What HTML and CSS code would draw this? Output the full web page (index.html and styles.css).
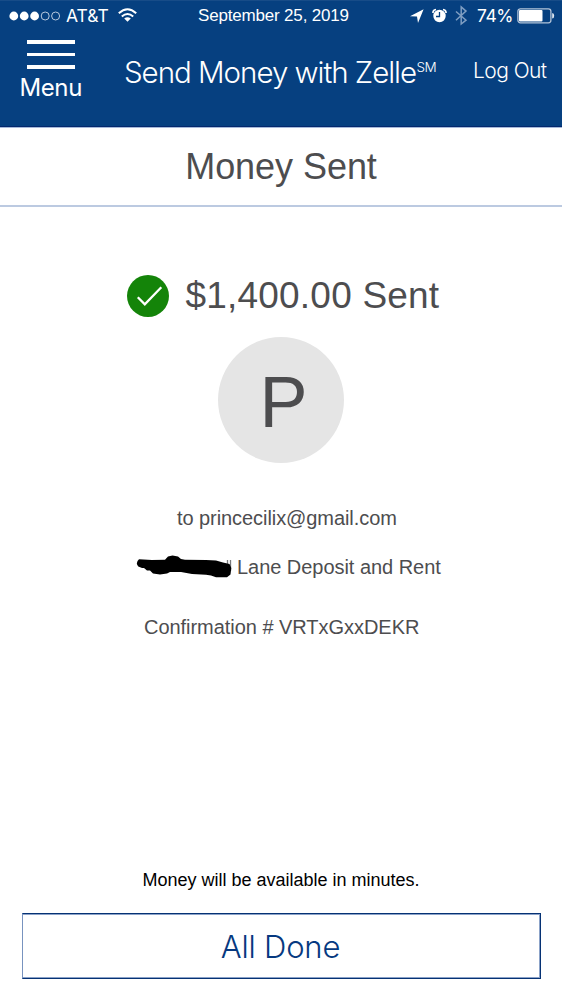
FILE: index.html
```
<!DOCTYPE html>
<html lang="en">
<head>
<meta charset="utf-8">
<title>Money Sent</title>
<link rel="stylesheet" href="styles.css">
</head>
<body>
<div class="screen">
  <header class="header">
    <div class="status">
      <svg class="signal" width="52" height="12" viewBox="0 0 52 12">
        <g fill="#fff"><circle cx="4.8" cy="6" r="4.4"/><circle cx="15.2" cy="6" r="4.4"/><circle cx="25.6" cy="6" r="4.4"/></g>
        <g fill="none" stroke="#b9c9de"><circle cx="36.2" cy="6" r="4"/><circle cx="46.6" cy="6" r="4"/></g>
      </svg>
      <span class="carrier">AT&amp;T</span>
      <svg class="wifi" width="20" height="15" viewBox="0 0 20 15">
        <g fill="none" stroke="#fff" stroke-width="2"><path d="M.8 5.2Q9.5-2.8 18.2 5.2"/><path d="M3.8 8.5Q9.5 3.4 15.2 8.5"/></g>
        <path d="M6.2 10.6Q9.5 8 12.8 10.6L9.5 13.8Z" fill="#fff"/>
      </svg>
      <span class="date">September 25, 2019</span>
      <svg class="status-icons" width="62" height="22" viewBox="0 0 62 22">
        <path d="M0 11.2 13.6 4.2 8 18 7 11.5Z" fill="#fff"/>
        <circle cx="29.5" cy="11" r="6.2" fill="#fff"/>
        <path d="M29.5 7V11.5H26" fill="none" stroke="#064080" stroke-width="1.3"/>
        <path d="M22.9 8.1Q22.8 4.9 26 4.5M33 4.5Q36.2 4.9 36.1 8.1" fill="none" stroke="#fff" stroke-width="1.6"/>
        <path d="M46 6.5 56 15.2 51.2 19V2L56 6.1 46 15.2" fill="none" stroke="#7f9ec2" stroke-width="1.5"/>
      </svg>
      <span class="percent">74%</span>
      <svg class="battery" width="38" height="16" viewBox="0 0 38 16">
        <rect x=".9" y=".8" width="33" height="14" rx="2.5" fill="none" stroke="#b2c3d8" stroke-width="1.3"/>
        <rect x="2" y="2" width="23.5" height="11.6" rx="1" fill="#fff"/>
        <path d="M35.2 5Q37.2 5.2 37.2 7.8T35.2 10.6Z" fill="#e1e8f1"/>
      </svg>
    </div>
    <nav class="nav">
      <div class="menu">
        <span class="bars"><i></i><i></i><i></i></span>
        <span class="menu-label">Menu</span>
      </div>
      <h1 class="title"><span class="title-text">Send Money with Zelle</span><span class="mark">SM</span></h1>
      <span class="logout">Log Out</span>
    </nav>
  </header>
  <div class="heading"><h2>Money Sent</h2></div>
  <main class="content">
    <div class="amount">
      <svg class="check" width="42" height="42" viewBox="0 0 42 42">
        <circle cx="21" cy="21" r="21" fill="#148409"/>
        <path d="M10.8 22.2 17.8 29.3 34.3 12.3" fill="none" stroke="#fff" stroke-width="2.3"/>
      </svg>
      <span class="amount-text">$1,400.00 Sent</span>
    </div>
    <div class="avatar">P</div>
    <div class="line recipient"><span>to princecilix@gmail.com</span></div>
    <div class="line memo">
      <svg class="redaction" width="96" height="24" viewBox="0 0 96 24">
        <path d="M91.5 5V10M94.5 5V16" stroke="#77787a" stroke-width="1.3"/>
        <path d="M3 4.3Q-1 8 2.3 11.5L6 13H8L11 15.5H14L17 18.5 24 19.5 31 18.5 34 17H45L56 19 70 19.8 75 20.5 80 22.3H91L94.5 19.5 95.3 13 93.5 9 87 7.5 80 5.5 70 5 49 4.8 45 4 42 1.5 36.5 .5 32 1.5 29 4.8 16 5Z" fill="#000"/>
      </svg>
      <span>Lane Deposit and Rent</span>
    </div>
    <div class="line confirmation"><span>Confirmation # VRTxGxxDEKR</span></div>
  </main>
  <footer class="footer">
    <p class="note">Money will be available in minutes.</p>
    <button class="done"><span>All Done</span></button>
  </footer>
</div>
</body>
</html>
```
FILE: styles.css
```
* { box-sizing: border-box; }
body { margin: 0; background: #fff; font-family: "Liberation Sans", Arial, sans-serif; }
h1, h2, p { margin: 0; font-weight: 400; }
svg { display: block; flex: none; }
span { white-space: nowrap; }
.screen { width: 562px; height: 988px; display: flex; flex-direction: column; overflow: hidden; }
.header { height: 127px; flex: none; background: #064080; border-top: 1px solid #174c88; border-bottom: 1px solid #04286e; color: #fff; }
.status { height: 29px; display: flex; align-items: center; padding-left: 9px; }
.carrier { width: 44px; margin-left: 5px; font: 400 17.5px "Inter", sans-serif; }
.wifi { margin-left: 8px; }
.date { width: 152px; margin-left: 60px; padding-top: 1px; font-size: 17px; letter-spacing: -.18px; }
.status-icons { margin-left: 60px; }
.percent { width: 36px; margin-left: 5px; font: 400 17.5px "Inter", sans-serif; letter-spacing: -.5px; }
.battery { margin-left: 3.5px; }
.nav { display: flex; align-items: flex-start; padding-top: 10px; }
.menu { width: 64px; margin-left: 19px; display: flex; flex-direction: column; }
.bars { width: 48px; margin-left: 8px; display: flex; flex-direction: column; gap: 9px; }
.bars i { height: 3.5px; background: #fff; }
.menu-label { font: 400 24px/28px "Inter", sans-serif; letter-spacing: -.4px; margin: 5px 0 0 .5px; }
.title { display: flex; width: 313px; margin: 15px 0 0 41px; font: 300 29.5px/34px "Inter", sans-serif; }
.title-text { letter-spacing: -1.02px; }
.mark { font-size: 13.5px; line-height: 25px; letter-spacing: -.7px; margin-left: .5px; }
.logout { font: 300 21px/26px "Inter", sans-serif; letter-spacing: -.55px; margin: 18px 0 0 36px; }
.heading { height: 80px; flex: none; border-top: 1px solid #a5bada; border-bottom: 2px solid #bccae1; text-align: center; color: #4d4d4f; }
.heading h2 { font-size: 36px; line-height: 42px; padding-top: 18px; letter-spacing: -.05px; }
.content { flex: 1; color: #4d4d4f; display: flex; flex-direction: column; align-items: center; }
.amount { display: flex; align-items: center; gap: 17px; margin-top: 68px; height: 42px; width: 313px; margin-left: 4px; }
.amount-text { font-size: 37px; letter-spacing: .2px; }
.avatar { width: 126px; height: 126px; margin-top: 20px; border-radius: 50%; background: #e5e5e5; font-size: 72px; line-height: 130px; padding-left: 5px; text-align: center; }
.line { display: flex; font-size: 20px; line-height: 24px; height: 24px; }
.recipient { margin-top: 43px; width: 220px; margin-left: 12px; letter-spacing: -.07px; }
.memo { margin-top: 25px; width: 306px; margin-left: 16px; gap: 5px; letter-spacing: -.04px; }
.confirmation { margin-top: 36px; width: 276px; margin-left: 2px; letter-spacing: -.04px; }
.footer { flex: none; height: 119px; }
.note { text-align: center; font-size: 18px; line-height: 22px; color: #000; }
.done { display: block; width: 519px; height: 66px; margin: 22px 0 0 22px; padding: 2px 2px 0 0; background: #fff; border: 1px solid #063274; border-left-color: #7893bf; box-shadow: inset -1px 1px #8ba2c8, inset 0 -1px #8ba2c8; color: #063980; font: 300 31px/60px "Inter", sans-serif; letter-spacing: -.2px; }
```
